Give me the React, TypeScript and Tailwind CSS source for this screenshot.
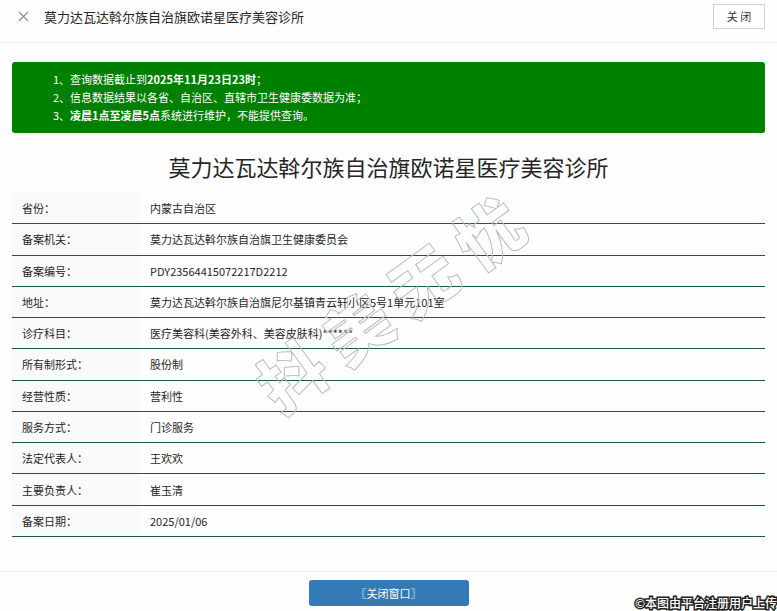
import { X } from 'lucide-react';

const CLINIC_NAME = '莫力达瓦达斡尔族自治旗欧诺星医疗美容诊所';

const records = [
  { label: '省份', value: '内蒙古自治区' },
  { label: '备案机关', value: '莫力达瓦达斡尔族自治旗卫生健康委员会' },
  { label: '备案编号', value: 'PDY23564415072217D2212' },
  { label: '地址', value: '莫力达瓦达斡尔族自治旗尼尔基镇青云轩小区5号1单元101室' },
  { label: '诊疗科目', value: '医疗美容科(美容外科、美容皮肤科)******' },
  { label: '所有制形式', value: '股份制' },
  { label: '经营性质', value: '营利性' },
  { label: '服务方式', value: '门诊服务' },
  { label: '法定代表人', value: '王欢欢' },
  { label: '主要负责人', value: '崔玉清' },
  { label: '备案日期', value: '2025/01/06' },
];

function Header() {
  return (
    <header className="flex justify-between border-b border-[#eeeeee] pl-[15px] pr-3 pt-1 pb-[13px]">
      <div className="flex items-center">
        <button type="button" aria-label="返回" className="text-[#8c8c8c]">
          <X className="size-[17px]" strokeWidth={1.5} />
        </button>
        <h1 className="ml-3 text-[13px] leading-5 text-[#262626]">{CLINIC_NAME}</h1>
      </div>
      <button
        type="button"
        className="h-[25px] w-[52px] border border-[#d0d0d0] bg-white text-[11px] text-[#333333]"
      >
        关 闭
      </button>
    </header>
  );
}

function Notice() {
  return (
    <div className="rounded-[3px] bg-[#008000] pt-2 pb-[9px] pl-[41px] pr-4 text-[11px] leading-[18px] text-white">
      <p>1、查询数据截止到<strong>2025年11月23日23时</strong>；</p>
      <p>2、信息数据结果以各省、自治区、直辖市卫生健康委数据为准；</p>
      <p>3、<strong>凌晨1点至凌晨5点</strong>系统进行维护，不能提供查询。</p>
    </div>
  );
}

function RecordTable() {
  return (
    <table className="h-[344px] w-full border-separate border-spacing-0 text-left text-[11px] leading-4 text-[#262626]">
      <tbody>
        {records.map(({ label, value }) => (
          <tr key={label}>
            <th scope="row" className="w-32 border-b border-[#1d5641] bg-[#fafafa] px-[10px] font-normal">
              {label}：
            </th>
            <td className="border-b border-[#1d5641] px-[10px]">{value}</td>
          </tr>
        ))}
      </tbody>
    </table>
  );
}

// Outlined diagonal text laid over the record table
function Watermark() {
  return (
    <div
      aria-hidden="true"
      className="pointer-events-none absolute top-48 left-1/2 flex h-[220px] w-[280px] -translate-x-1/2 items-center justify-center"
    >
      <div className="flex shrink-0 -rotate-36 gap-[15px] text-[66px] leading-none font-black text-transparent [-webkit-text-stroke:1px_#bcbcbc]">
        <span>抖</span>
        <span>美</span>
        <span>无</span>
        <span>忧</span>
      </div>
    </div>
  );
}

export default function App() {
  return (
    <div className="relative min-h-screen bg-[#fefefe] font-['Noto_Sans_CJK_SC',sans-serif]">
      <Header />
      <main className="px-3 pt-[19px]">
        <Notice />
        <h2 className="mt-[18px] mb-3 text-center text-[22px] leading-[30px] text-[#262626]">
          {CLINIC_NAME}
        </h2>
        <RecordTable />
      </main>
      <footer className="mt-[34px] flex justify-center border-t border-[#eeeeee] pt-2 pb-[5px]">
        <button type="button" className="h-[26px] w-40 rounded-[3px] bg-[#337ab7] text-[11px] text-white">
          〖关闭窗口〗
        </button>
      </footer>
      <Watermark />
      <p className="absolute right-0 bottom-0 text-[12px] leading-4 font-medium text-white [-webkit-text-stroke:3px_#222222] [paint-order:stroke_fill]">
        ©本图由平台注册用户上传
      </p>
    </div>
  );
}
